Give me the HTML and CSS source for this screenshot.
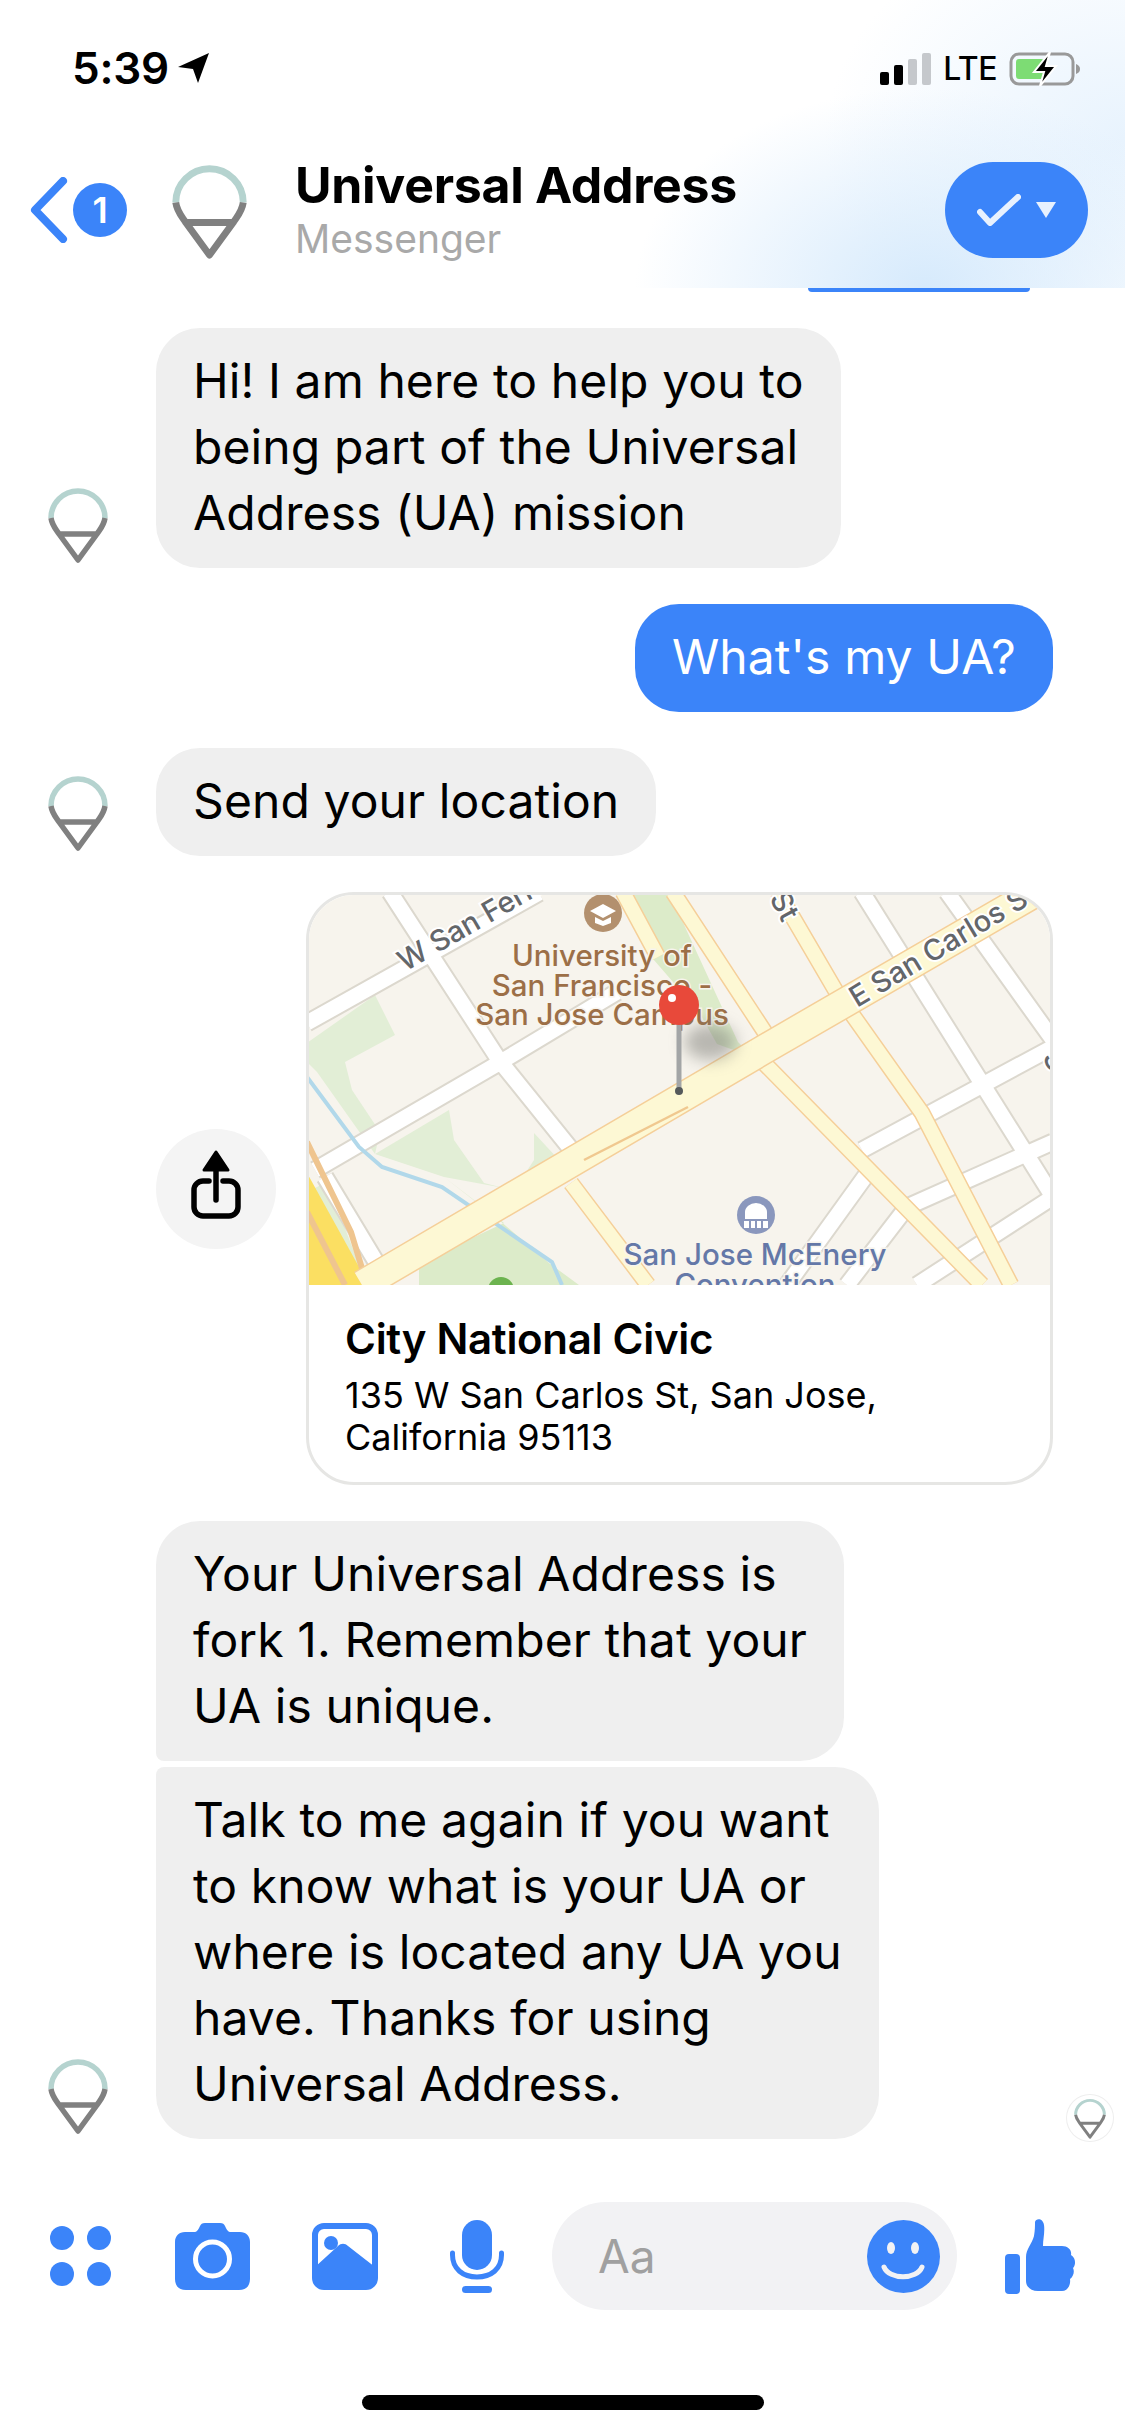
FILE: index.html
```html
<!DOCTYPE html>
<html lang="en">
<head>
  <meta charset="UTF-8" />
  <title>Universal Address</title>
  <link rel="stylesheet" href="styles.css">
</head>
<body>
  <svg class="defs" width="0" height="0">
    <symbol id="ua" viewBox="0 0 60 78">
      <path d="M3 33 A27 27 0 1 1 57 33" fill="none" stroke="#b5d3cf" stroke-width="5.5"/>
      <path d="M3 33 C4 40 7 43 11 49 L30 75 L49 49 C53 43 56 40 57 33 M11 49 H49" fill="none" stroke="#808080" stroke-width="5.5" stroke-linejoin="round"/>
    </symbol>
  </svg>

  <header class="top">
    <div class="status">
      <div class="time">5:39
        <svg class="arrow" width="32" height="30" viewBox="0 0 32 30"><path d="M31 0 L20 30 L15 16 L0 14 Z"/></svg>
      </div>
      <div class="status-right">
        <div class="signal"><i class="b1"></i><i class="b2"></i><i class="b3"></i><i class="b4"></i></div>
        <span class="lte">LTE</span>
        <svg width="72" height="34" viewBox="0 0 72 34">
          <rect x="2" y="2" width="62" height="30" rx="8" fill="none" stroke="#999" stroke-width="3"/>
          <rect x="7" y="7" width="28" height="20" rx="3" fill="#7ddc74"/>
          <path d="M67 12 C70 13 71 15 71 17 C71 19 70 21 67 22 Z" fill="#999"/>
          <path d="M41 0 L25 20 H35 L31 34 L47 14 H37 Z" fill="#000" stroke="#fff" stroke-width="2"/>
        </svg>
      </div>
    </div>
    <div class="nav">
      <svg class="back" width="38" height="66" viewBox="0 0 38 66"><path d="M33 4 L5 33 L33 62" fill="none" stroke="#3b84f9" stroke-width="8" stroke-linecap="round" stroke-linejoin="round"/></svg>
      <div class="badge">1</div>
      <svg class="logo" width="75" height="100"><use href="#ua"/></svg>
      <div class="who">
        <div class="name">Universal Address</div>
        <div class="sub">Messenger</div>
      </div>
      <button class="toggle">
        <svg width="44" height="32" viewBox="0 0 44 32"><path d="M3 18 L13 29 L41 3" fill="none" stroke="#e8f1fe" stroke-width="6" stroke-linecap="round" stroke-linejoin="round"/></svg>
        <svg width="22" height="18" viewBox="0 0 22 18"><path d="M1 1 H21 L11 17 Z" fill="#e8f1fe"/></svg>
      </button>
    </div>
  </header>

  <main class="chat">
    <div class="peek"></div>

    <div class="row first">
      <svg class="avatar" width="60" height="78"><use href="#ua"/></svg>
      <div class="bubble">Hi! I am here to help you to<br>being part of the Universal<br>Address (UA) mission</div>
    </div>

    <div class="row out">
      <div class="bubble blue">What's my UA?</div>
    </div>

    <div class="row">
      <svg class="avatar" width="60" height="78"><use href="#ua"/></svg>
      <div class="bubble">Send your location</div>
    </div>

    <div class="row card-row">
      <div class="share">
        <svg width="120" height="120" viewBox="0 0 120 120">
          <path d="M60 23 L72 41 H48 Z" stroke="#000" stroke-width="3" stroke-linejoin="round"/>
          <path d="M60 41 V71 M53 52 H47 a9 9 0 0 0 -9 9 V78 a9 9 0 0 0 9 9 H73 a9 9 0 0 0 9 -9 V61 a9 9 0 0 0 -9 -9 H67" fill="none" stroke="#000" stroke-width="5.5" stroke-linecap="round"/>
        </svg>
      </div>
      <div class="card">
        <svg class="map" width="741" height="390" viewBox="2 3 741 390">
          <rect width="760" height="400" fill="#f7f4ed"/>
          <!-- parks -->
          <g fill="#e2eed6">
            <path d="M0 151 L68 103 L88 143 L38 170 L45 198 L73 240 L68 262 L10 180 L0 170 Z"/>
            <path d="M68 262 L142 218 L147 248 L177 291 L197 296 L137 285 Z"/>
            <path d="M227 241 L252 268 L212 291 L227 268 Z"/>
            <path d="M20 290 L60 393 H0 V300 Z"/>
          </g>
          <path d="M137 285 L192 328 L242 371 L272 393 H112 V371 L197 331 Z" fill="#dcebc9"/>
          <path d="M321 0 H362 L431 150 L446 165 L410 152 L392 120 L340 60 Z" fill="#dcebc9"/>
          <!-- white streets -->
          <g fill="none" stroke="#dcd8ce" stroke-width="19">
            <path d="M0 131 L232 1 M83 0 L192 168 L267 261 M8 278 L192 171 L310 100 M18 285 L83 393 M555 0 L746 305 M640 0 L746 148 M555 258 L746 155 M480 393 L560 282 M610 393 L746 305 M540 393 L600 315 L746 250"/>
          </g>
          <g fill="none" stroke="#fff" stroke-width="15">
            <path d="M0 131 L232 1 M83 0 L192 168 L267 261 M8 278 L192 171 L310 100 M18 285 L83 393 M555 0 L746 305 M640 0 L746 148 M555 258 L746 155 M480 393 L560 282 M610 393 L746 305 M540 393 L600 315 L746 250"/>
          </g>
          <!-- freeway -->
          <path d="M0 281 L62 393 H0 Z" fill="#fbdf62"/>
          <path d="M0 320 L38 393 M0 250 L44 340 L60 393" fill="none" stroke="#efc58f" stroke-width="6"/>
          <!-- river -->
          <path d="M0 185 L52 255 L75 275 L135 295 L245 370 L255 393" fill="none" stroke="#b1d8ea" stroke-width="4"/>
          <!-- yellow roads -->
          <g fill="none" stroke="#f5cf99" stroke-width="17">
            <path d="M316 0 L351 65 M366 0 L461 145 M456 170 L675 393 M471 0 L530 101 L615 221 L704 393 M264 291 L341 393"/>
          </g>
          <g fill="none" stroke="#fdf8d4" stroke-width="14">
            <path d="M316 0 L351 65 M366 0 L461 145 M456 170 L675 393 M471 0 L530 101 L615 221 L704 393 M264 291 L341 393"/>
          </g>
          <path d="M55 393 L456 158 L729 0" fill="none" stroke="#f5cf99" stroke-width="31"/>
          <path d="M55 393 L456 158 L729 0" fill="none" stroke="#fdf8d4" stroke-width="28"/>
          <path d="M277 268 L381 215" fill="none" stroke="#f0c88f" stroke-width="2.5"/>

          <circle cx="194" cy="398" r="13" fill="#6cb34f"/>

          <!-- labels -->
          <text class="road" transform="translate(98 80) rotate(-30)">W San Fern</text>
          <text class="road" transform="translate(550 116) rotate(-31)">E San Carlos St</text>
          <text class="road" transform="translate(462 6) rotate(62)">St</text>
          <text class="road" transform="translate(735 165) rotate(62)">S</text>

          <circle cx="296" cy="21" r="19" fill="#b3906e"/>
          <path d="M283 19 L296 12 L309 19 L296 26 Z M288 25 V31 L296 34 L304 31 V25 L296 29 Z" fill="#fff"/>
          <text class="poi edu" x="295" y="74">University of</text>
          <text class="poi edu" x="295" y="104">San Francisco -</text>
          <text class="poi edu" x="295" y="133">San Jose Campus</text>

          <circle cx="449" cy="323" r="19" fill="#8a97bd"/>
          <path d="M438 327 V320 A11 9 0 0 1 460 320 V327 Z M437 329 H461 V336 H437 Z" fill="#fff"/>
          <path d="M443 329 V336 M449 329 V336 M455 329 V336" stroke="#8a97bd" stroke-width="2"/>
          <text class="poi venue" x="448" y="373">San Jose McEnery</text>
          <text class="poi venue" x="448" y="403">Convention</text>

          <!-- pin -->
          <ellipse cx="403" cy="150" rx="26" ry="18" fill="#7a7a75" opacity="0.5" class="pin-shadow"/>
          <rect x="369.500" y="130" width="5" height="72" fill="#a3a5a6"/>
          <ellipse cx="372" cy="113" rx="20" ry="20" fill="#e8493a"/>
          <circle cx="365" cy="106" r="4" fill="#fff"/>
          <circle cx="372" cy="199" r="4" fill="#55595a"/>
        </svg>
        <div class="card-text">
          <div class="place">City National Civic</div>
          <div class="addr">135 W San Carlos St, San Jose,<br>California 95113</div>
        </div>
      </div>
    </div>

    <div class="row">
      <div class="bubble join-down">Your Universal Address is<br>fork 1. Remember that your<br>UA is unique.</div>
    </div>

    <div class="row tight">
      <svg class="avatar" width="60" height="78"><use href="#ua"/></svg>
      <div class="bubble join-up">Talk to me again if you want<br>to know what is your UA or<br>where is located any UA you<br>have. Thanks for using<br>Universal Address.</div>
      <div class="seen"><svg width="32" height="42"><use href="#ua"/></svg></div>
    </div>
  </main>

  <footer class="composer">
    <svg class="c-apps" width="61" height="60" viewBox="0 0 61 60" fill="#3b84f9">
      <circle cx="12" cy="12" r="12"/><circle cx="49" cy="12" r="12"/><circle cx="12" cy="48" r="12"/><circle cx="49" cy="48" r="12"/>
    </svg>
    <svg class="c-cam" width="75" height="67" viewBox="0 0 75 67">
      <path fill="#3b84f9" d="M10 9 H19 C22 9 23 7 25 3 C26 1 27 0 30 0 H45 C48 0 49 1 50 3 C52 7 53 9 56 9 H65 C71 9 75 13 75 19 V56 C75 63 71 67 64 67 H11 C4 67 0 63 0 56 V19 C0 13 4 9 10 9 Z"/>
      <circle cx="37.5" cy="36" r="17" fill="#3b84f9" stroke="#fff" stroke-width="5"/>
    </svg>
    <svg class="c-gal" width="66" height="67" viewBox="0 0 66 67">
      <rect x="3" y="3" width="60" height="61" rx="9" fill="#fff" stroke="#3b84f9" stroke-width="6"/>
      <path fill="#3b84f9" d="M3 44 L26 23 C29 20 33 20 36 23 L63 44 V58 C63 62 60 64 57 64 H9 C6 64 3 62 3 58 Z"/>
      <circle cx="19" cy="20" r="7" fill="#3b84f9"/>
    </svg>
    <svg class="c-mic" width="54" height="73" viewBox="0 0 54 73">
      <rect x="12" y="0" width="30" height="50" rx="15" fill="#3b84f9"/>
      <path d="M2.500 33 V35 C2.500 49 13 57 27 57 C41 57 51.500 49 51.500 35 V33" fill="none" stroke="#3b84f9" stroke-width="5" stroke-linecap="round"/>
      <rect x="12" y="66" width="30" height="7" rx="3.500" fill="#3b84f9"/>
    </svg>
    <div class="input">
      <span class="aa">Aa</span>
      <svg width="73" height="73" viewBox="0 0 73 73">
        <circle cx="36.500" cy="36.500" r="36.500" fill="#3b84f9"/>
        <ellipse cx="24" cy="28" rx="4" ry="6" fill="#f2f2f4"/><ellipse cx="48" cy="28" rx="4" ry="6" fill="#f2f2f4"/>
        <path d="M17 47 C22 60 50 60 55 47" fill="none" stroke="#f2f2f4" stroke-width="5" stroke-linecap="round"/>
      </svg>
    </div>
    <svg class="c-like" width="73" height="75" viewBox="0 0 73 75" fill="#3b84f9">
      <rect x="0" y="35" width="15" height="40" rx="4"/>
      <path d="M21 38 C21 30 27 25 29 17 C30 11 30 7 30 3 C31 -1 38 -1 39 6 C40 13 38 20 38 27 H57 C63 27 67 31 66 36 C71 39 71 46 68 49 C70 53 68 58 65 60 C66 67 62 72 57 72 H33 C26 72 21 68 21 62 Z"/>
    </svg>
  </footer>
  <div class="home"><div class="home-bar"></div></div>
</body>
</html>
```

FILE: styles.css
```css
:root {
  --blue: #3b84f9;
  --bubble: #efefef;
}

html, body {
  margin: 0;
  padding: 0;
}

body {
  width: 1125px;
  height: 2436px;
  display: flex;
  flex-direction: column;
  font-family: Inter, "Liberation Sans", sans-serif;
  color: #000;
  background: #fff;
  overflow: hidden;
}

.defs {
  position: absolute;
}

/* header */
.top {
  height: 288px;
  flex: none;
  background:
    radial-gradient(ellipse 290px 200px at 925px 288px, #d6eafc 0%, rgba(214, 234, 252, 0.55) 45%, rgba(214, 234, 252, 0) 100%),
    radial-gradient(ellipse 300px 230px at 1125px 140px, rgba(226, 240, 253, 0.8) 0%, rgba(226, 240, 253, 0) 100%),
    #fff;
}

.status {
  height: 96px;
  padding: 0 44px 0 72px;
  display: flex;
  justify-content: space-between;
  align-items: flex-end;
  box-sizing: border-box;
}

.time {
  display: flex;
  align-items: center;
  gap: 9px;
  font-size: 44px;
  font-weight: 600;
  line-height: 52px;
  letter-spacing: -0.2px;
  padding-bottom: 2px;
}

.status-right {
  display: flex;
  align-items: center;
  gap: 12px;
  padding-bottom: 10px;
}

.signal {
  display: flex;
  align-items: flex-end;
  gap: 5px;
  height: 32px;
}

.signal i {
  display: block;
  width: 9px;
  border-radius: 2px;
  background: #c5c8cc;
}

.signal .b1 { height: 13px; background: #000; }
.signal .b2 { height: 20px; background: #000; }
.signal .b3 { height: 26px; }
.signal .b4 { height: 32px; }

.lte {
  font-size: 32px;
  font-weight: 500;
  line-height: 34px;
  letter-spacing: -0.5px;
}

.nav {
  height: 192px;
  padding: 36px 37px 0 30px;
  box-sizing: border-box;
  display: flex;
  align-items: center;
}

.badge {
  width: 54px;
  height: 54px;
  margin-left: 5px;
  border-radius: 50%;
  background: var(--blue);
  color: #fff;
  font-size: 36px;
  font-weight: 600;
  line-height: 54px;
  text-align: center;
}

.logo {
  margin-left: 45px;
}

.who {
  margin-left: 48px;
  margin-top: 0;
}

.name {
  font-size: 50px;
  font-weight: 700;
  line-height: 58px;
  letter-spacing: -0.3px;
}

.sub {
  font-size: 39px;
  line-height: 50px;
  color: #a9a9a9;
}

.toggle {
  margin-left: auto;
  width: 143px;
  height: 96px;
  padding: 0;
  border: 0;
  border-radius: 48px;
  background: var(--blue);
  display: flex;
  align-items: center;
  justify-content: center;
  gap: 14px;
}

/* chat */
.chat {
  flex: 1;
  overflow: hidden;
}

.peek {
  width: 222px;
  height: 4px;
  margin-left: 808px;
  background: var(--blue);
  border-radius: 0 0 20px 20px;
}

.row {
  display: flex;
  align-items: flex-end;
  margin-top: 36px;
  padding-left: 48px;
}

.row.tight {
  margin-top: 6px;
}

.row.out {
  justify-content: flex-end;
  padding-right: 72px;
}

.avatar {
  flex: none;
  margin-right: 48px;
  margin-bottom: 5px;
}

.bubble {
  padding: 20px 37px 22px;
  border-radius: 44px;
  background: var(--bubble);
  font-size: 48px;
  line-height: 66px;
  letter-spacing: 0.1px;
  white-space: nowrap;
}

.bubble.blue {
  background: var(--blue);
  color: #fff;
}

.bubble.join-down {
  margin-left: 108px;
  border-bottom-left-radius: 8px;
}

.bubble.join-up {
  border-top-left-radius: 8px;
}

.seen {
  margin-left: auto;
  margin-right: 12px;
  width: 46px;
  height: 46px;
  margin-bottom: -2px;
  border-radius: 50%;
  box-shadow: 0 0 0 1px #eeeeee;
  display: flex;
  align-items: center;
  justify-content: center;
}

/* location card */
.row.card-row {
  align-items: center;
  padding-left: 156px;
  gap: 30px;
}

.share {
  width: 120px;
  height: 120px;
  border-radius: 50%;
  background: #f4f4f4;
}

.share svg {
  display: block;
}

.card {
  width: 747px;
  height: 593px;
  box-sizing: border-box;
  border: 3px solid #e6e6e4;
  border-radius: 48px;
  overflow: hidden;
}

.map {
  display: block;
}

.road {
  font-size: 29px;
  font-weight: 500;
  fill: #63666a;
  stroke: #fff;
  stroke-width: 4px;
  paint-order: stroke;
}

.poi {
  font-size: 29.500px;
  font-weight: 500;
  text-anchor: middle;
  stroke: #f7f4ed;
  stroke-width: 3px;
  paint-order: stroke;
}

.edu { fill: #9c6f47; }
.venue { fill: #6478a8; }

.pin-shadow {
  filter: blur(8px);
}

.card-text {
  padding: 30px 36px 0;
}

.place {
  font-size: 42px;
  font-weight: 600;
  line-height: 48px;
  letter-spacing: -0.3px;
}

.addr {
  margin-top: 11px;
  font-size: 36px;
  line-height: 42px;
}

/* composer */
.composer {
  flex: none;
  height: 108px;
  padding-left: 50px;
  display: flex;
  align-items: center;
}

.c-apps { margin-right: 64px; }
.c-cam { margin-right: 62px; }
.c-gal { margin-right: 72px; }
.c-mic { margin-right: 48px; }

.input {
  width: 405px;
  height: 108px;
  margin-right: 48px;
  padding: 0 17px 0 46px;
  box-sizing: border-box;
  border-radius: 54px;
  background: #f2f2f4;
  display: flex;
  align-items: center;
  justify-content: space-between;
}

.aa {
  font-size: 46px;
  color: #a0a0a0;
}

.home {
  flex: none;
  height: 126px;
  padding-top: 85px;
  box-sizing: border-box;
}

.home-bar {
  width: 402px;
  height: 15px;
  margin: 0 auto;
  border-radius: 8px;
  background: #000;
}
```
